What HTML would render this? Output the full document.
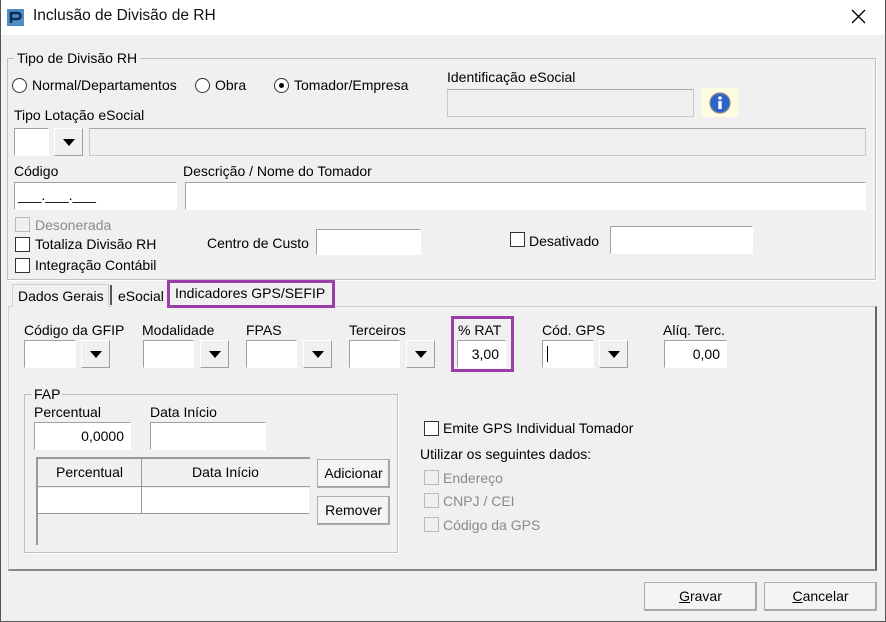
<!DOCTYPE html>
<html><head><meta charset="utf-8"><style>
*{box-sizing:border-box;margin:0;padding:0}
body{width:886px;height:622px;overflow:hidden;background:#f0f0f0;font-family:"Liberation Sans",sans-serif;font-size:14px;color:#000;position:relative}
.a{position:absolute;white-space:nowrap}
.in{position:absolute;background:#fff;border-top:1px solid #a0a0a0;border-left:1px solid #a0a0a0;border-right:1px solid #fff;border-bottom:1px solid #fff}
.dis{background:#f0f0f0;border:1px solid #c8c8c8;border-top-color:#a8a8a8}
.btn{position:absolute;background:#f4f4f4;border:1px solid #adadad;box-shadow:inset -1px -1px 0 #a0a0a0;text-align:center}
.dd{position:absolute;background:#f0f0f0;border-right:1px solid #a0a0a0;border-bottom:1px solid #a0a0a0;border-top:1px solid #fff;border-left:1px solid #fff}
.dd:after{content:"";position:absolute;left:50%;top:50%;margin-left:-6px;margin-top:-3px;border-left:6px solid transparent;border-right:6px solid transparent;border-top:7px solid #000}
.cb{position:absolute;width:15px;height:15px;background:#fff;border:1px solid #333}
.cbd{border-color:#bbb;background:#f0f0f0}
.rd{position:absolute;width:15px;height:15px;border-radius:50%;background:#fff;border:1px solid #333}
.grp{position:absolute;border:1px solid #c0c0c0;box-shadow:1px 1px 0 #fff}
.gray{color:#8a8a8a}
.r{text-align:right;padding-right:6px;line-height:26px}
</style></head><body>
<!-- title bar -->
<div class="a" style="left:0;top:0;width:886px;height:35px;background:#fff"></div>
<div class="a" style="left:0;top:0;width:1px;height:622px;background:#555"></div>
<div class="a" style="left:885px;top:0;width:1px;height:622px;background:#555"></div>
<div class="a" style="left:0;top:621px;width:886px;height:1px;background:#555"></div>
<div class="a" style="left:7px;top:9px;width:17px;height:17px;background:#4f8ec9"></div>
<svg class="a" style="left:7px;top:9px" width="17" height="17"><path d="M4 14V4h6.5a3 3 0 0 1 0 6H5" fill="none" stroke="#0f2c55" stroke-width="2.6"/></svg>
<div class="a" style="left:33px;top:7px;font-size:15.5px;color:#111">Inclusão de Divisão de RH</div>
<svg class="a" style="left:851px;top:9px" width="15" height="15"><path d="M1 1L14 14M14 1L1 14" stroke="#000" stroke-width="1.3"/></svg>

<!-- group Tipo -->
<div class="grp" style="left:7px;top:58px;width:869px;height:222px"></div>
<div class="a" style="left:14px;top:50px;background:#f0f0f0;padding:0 3px">Tipo de Divisão RH</div>
<div class="rd" style="left:12px;top:78px"></div><div class="a" style="left:32px;top:77px">Normal/Departamentos</div>
<div class="rd" style="left:195px;top:78px"></div><div class="a" style="left:215px;top:77px">Obra</div>
<div class="rd" style="left:274px;top:78px"></div><div class="a" style="left:279px;top:83px;width:5px;height:5px;border-radius:50%;background:#000"></div><div class="a" style="left:294px;top:77px">Tomador/Empresa</div>
<div class="a" style="left:447px;top:69px">Identificação eSocial</div>
<div class="in dis" style="left:447px;top:89px;width:247px;height:28px"></div>
<div class="a" style="left:701px;top:88px;width:37px;height:29px;background:#fdfbe0"></div>
<svg class="a" style="left:709px;top:92px" width="22" height="22"><circle cx="11" cy="11" r="10" fill="#2f62c7" stroke="#8a8a8a" stroke-width="1.2"/><circle cx="11" cy="6" r="1.8" fill="#fff"/><rect x="9.3" y="9" width="3.4" height="8" fill="#fff"/></svg>
<div class="a" style="left:14px;top:107px">Tipo Lotação eSocial</div>
<div class="in" style="left:14px;top:128px;width:35px;height:28px"></div>
<div class="dd" style="left:54px;top:128px;width:29px;height:28px"></div>
<div class="in dis" style="left:89px;top:128px;width:777px;height:28px"></div>
<div class="a" style="left:14px;top:163px">Código</div>
<div class="in" style="left:14px;top:182px;width:163px;height:28px"><span class="a" style="left:3px;top:4px">___.___.___</span></div>
<div class="a" style="left:183px;top:163px">Descrição / Nome do Tomador</div>
<div class="in" style="left:185px;top:182px;width:681px;height:28px"></div>
<div class="cb cbd" style="left:15px;top:217px"></div><div class="a gray" style="left:35px;top:217px">Desonerada</div>
<div class="cb" style="left:15px;top:237px"></div><div class="a" style="left:35px;top:236px">Totaliza Divisão RH</div>
<div class="cb" style="left:15px;top:258px"></div><div class="a" style="left:35px;top:257px">Integração Contábil</div>
<div class="a" style="left:207px;top:235px">Centro de Custo</div>
<div class="in" style="left:316px;top:229px;width:105px;height:26px"></div>
<div class="cb" style="left:510px;top:232px"></div><div class="a" style="left:529px;top:233px">Desativado</div>
<div class="in" style="left:610px;top:226px;width:143px;height:28px"></div>

<!-- tabs -->
<div class="a" style="left:8px;top:306px;width:869px;height:265px;border:1px solid #d0d0d0;border-right:2px solid #666;border-bottom:2px solid #888;background:#f0f0f0"></div>
<div class="a" style="left:12px;top:284px;width:97px;height:23px;border:1px solid #d0d0d0;border-bottom:none;background:#f0f0f0"></div>
<div class="a" style="left:18px;top:288px">Dados Gerais</div>
<div class="a" style="left:110px;top:285px;width:2px;height:20px;background:#555"></div>
<div class="a" style="left:112px;top:284px;width:55px;height:23px;background:#f0f0f0"></div>
<div class="a" style="left:118px;top:288px">eSocial</div>
<div class="a" style="left:167px;top:280px;width:168px;height:28px;border:3px solid #9b3fa8;background:#f0f0f0"></div>
<div class="a" style="left:175px;top:285px">Indicadores GPS/SEFIP</div>

<div class="a" style="left:24px;top:322px">Código da GFIP</div>
<div class="in" style="left:24px;top:340px;width:52px;height:28px"></div><div class="dd" style="left:81px;top:340px;width:29px;height:28px"></div>
<div class="a" style="left:142px;top:322px">Modalidade</div>
<div class="in" style="left:143px;top:340px;width:51px;height:28px"></div><div class="dd" style="left:200px;top:340px;width:29px;height:28px"></div>
<div class="a" style="left:246px;top:322px">FPAS</div>
<div class="in" style="left:246px;top:340px;width:51px;height:28px"></div><div class="dd" style="left:303px;top:340px;width:29px;height:28px"></div>
<div class="a" style="left:349px;top:322px">Terceiros</div>
<div class="in" style="left:349px;top:340px;width:51px;height:28px"></div><div class="dd" style="left:406px;top:340px;width:29px;height:28px"></div>
<div class="a" style="left:451px;top:316px;width:63px;height:56px;border:3px solid #9b3fa8"></div>
<div class="a" style="left:458px;top:322px">% RAT</div>
<div class="in r" style="left:457px;top:340px;width:49px;height:28px">3,00</div>
<div class="a" style="left:542px;top:322px">Cód. GPS</div>
<div class="in" style="left:542px;top:340px;width:52px;height:28px"><span class="a" style="left:4px;top:5px;width:1px;height:16px;background:#000"></span></div><div class="dd" style="left:599px;top:340px;width:29px;height:28px"></div>
<div class="a" style="left:663px;top:322px">Alíq. Terc.</div>
<div class="in r" style="left:664px;top:340px;width:63px;height:28px">0,00</div>

<!-- FAP -->
<div class="grp" style="left:24px;top:394px;width:374px;height:159px"></div>
<div class="a" style="left:32px;top:386px;background:#f0f0f0;padding:0 2px">FAP</div>
<div class="a" style="left:34px;top:404px">Percentual</div>
<div class="in r" style="left:34px;top:422px;width:97px;height:28px">0,0000</div>
<div class="a" style="left:150px;top:404px">Data Início</div>
<div class="in" style="left:150px;top:422px;width:116px;height:28px"></div>
<div class="a" style="left:36px;top:457px;width:274px;height:88px;border-left:2px solid #999;border-top:2px solid #999;background:#f0f0f0"></div>
<div class="a" style="left:38px;top:459px;width:272px;height:28px;border-bottom:1px solid #999"></div>
<div class="a" style="left:38px;top:464px;width:103px;text-align:center">Percentual</div>
<div class="a" style="left:142px;top:464px;width:167px;text-align:center">Data Início</div>
<div class="a" style="left:38px;top:488px;width:271px;height:26px;background:#fff;border-bottom:1px solid #999"></div>
<div class="a" style="left:141px;top:459px;width:1px;height:54px;background:#999"></div>
<div class="btn" style="left:317px;top:459px;width:73px;height:29px;line-height:27px">Adicionar</div>
<div class="btn" style="left:317px;top:496px;width:73px;height:29px;line-height:27px">Remover</div>

<div class="cb" style="left:424px;top:421px"></div><div class="a" style="left:443px;top:420px">Emite GPS Individual Tomador</div>
<div class="a" style="left:420px;top:446px">Utilizar os seguintes dados:</div>
<div class="cb cbd" style="left:424px;top:470px"></div><div class="a gray" style="left:443px;top:470px">Endereço</div>
<div class="cb cbd" style="left:424px;top:493px"></div><div class="a gray" style="left:443px;top:493px">CNPJ / CEI</div>
<div class="cb cbd" style="left:424px;top:517px"></div><div class="a gray" style="left:443px;top:517px">Código da GPS</div>

<div class="btn" style="left:644px;top:582px;width:113px;height:29px;line-height:27px"><u>G</u>ravar</div>
<div class="btn" style="left:764px;top:582px;width:113px;height:29px;line-height:27px"><u>C</u>ancelar</div>
</body></html>
